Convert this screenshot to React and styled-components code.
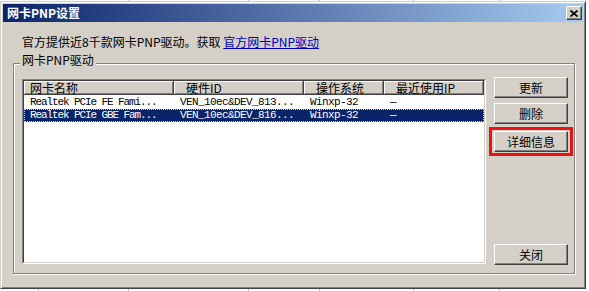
import React from 'react';
import styled, { createGlobalStyle } from 'styled-components';

const GlobalStyle = createGlobalStyle`
  html, body { margin: 0; padding: 0; background: #fff; }
  body {
    font-family: "Noto Sans CJK SC", "Liberation Sans", sans-serif;
    font-size: 12px;
    color: #000;
  }
  #root { width: 589px; height: 291px; overflow: hidden; }
`;

const CJK = `"Noto Sans CJK SC", "Liberation Sans", sans-serif`;
const MONO = `"Liberation Mono", "Noto Sans CJK SC", monospace`;

const vline = (x) =>
  `linear-gradient(to right, transparent ${x}px, #c4c4c4 ${x}px, #c4c4c4 ${x + 1}px, transparent ${x + 1}px)`;

const Page = styled.div`
  width: 589px;
  height: 291px;
  box-sizing: border-box;
  padding-top: 1px;
  background-color: #fff;
  background-image: ${[38, 128, 248, 319, 413, 499].map(vline).join(', ')};
`;

const Window = styled.div`
  box-sizing: border-box;
  width: 586px;
  height: 288px;
  background: #d4d0c8;
  border: 1px solid;
  border-color: #d4d0c8 #404040 #404040 #d4d0c8;
  box-shadow: inset 1px 1px 0 #fff, inset -1px -1px 0 #808080;
  padding: 2px;
  display: flex;
  flex-direction: column;
`;

const TitleBar = styled.div`
  height: 18px;
  flex: none;
  display: flex;
  align-items: center;
  padding-left: 4px;
  background: linear-gradient(to right, #0a246a, #a6caf0);
  color: #fff;
  font-weight: bold;
  font-size: 12px;
  line-height: 18px;
  font-family: ${CJK};
`;

const TitleText = styled.span`
  flex: 1;
`;

const CloseButton = styled.div`
  box-sizing: border-box;
  width: 16px;
  height: 14px;
  margin-right: 1px;
  background: #d4d0c8;
  border: 1px solid;
  border-color: #fff #404040 #404040 #fff;
  box-shadow: inset -1px -1px 0 #808080;
  display: flex;
  align-items: center;
  justify-content: center;
`;

const Body = styled.div`
  flex: 1;
  display: flex;
  flex-direction: column;
  padding: 13px 7px 12px 10px;
  min-height: 0;
`;

const Intro = styled.div`
  height: 14px;
  line-height: 14px;
  padding-left: 9px;
  font-family: ${CJK};
  font-size: 12px;
  white-space: nowrap;
`;

const Link = styled.a`
  color: #0000c0;
  text-decoration: underline;
  cursor: pointer;
`;

const GroupBox = styled.div`
  position: relative;
  flex: 1;
  margin-top: 14px;
  margin-right: 1px;
  border: 1px solid #808080;
  box-shadow: inset 1px 1px 0 #fff, 1px 1px 0 #fff;
  display: flex;
  gap: 8px;
  padding: 13px 6px 8px 8px;
  min-height: 0;
`;

const Legend = styled.span`
  position: absolute;
  top: -11px;
  left: 6px;
  padding: 0 2px;
  background: #d4d0c8;
  line-height: 14px;
  font-family: ${CJK};
  font-size: 12px;
`;

const ListOuter = styled.div`
  flex: 1;
  margin: 2px 0 1px;
  border: 1px solid;
  border-color: #808080 #fff #fff #808080;
  display: flex;
`;

const ListInner = styled.div`
  flex: 1;
  border: 1px solid;
  border-color: #404040 #d4d0c8 #d4d0c8 #404040;
  background: #fff;
  overflow: hidden;
`;

const COLS = '150px 130px 80px 100px';

const HeaderRow = styled.div`
  display: grid;
  grid-template-columns: ${COLS};
  height: 14px;
`;

const HeaderCell = styled.div`
  box-sizing: border-box;
  height: 14px;
  background: #d4d0c8;
  border-right: 1px solid #404040;
  border-bottom: 1px solid #404040;
  box-shadow: inset 1px 1px 0 #fff, inset -1px -1px 0 #808080;
  padding-left: ${(p) => p.$pad}px;
  display: flex;
  align-items: center;
  font-family: ${CJK};
  font-size: 12px;
  line-height: 12px;
  white-space: nowrap;
`;

const DataRow = styled.div`
  display: grid;
  grid-template-columns: ${COLS};
  height: 13px;
  line-height: 13px;
  margin-top: ${(p) => (p.$first ? '1px' : '0')};
  background: ${(p) => (p.$selected ? '#0a246a' : 'transparent')};
  color: ${(p) => (p.$selected ? '#fff' : '#000')};
  outline: ${(p) => (p.$selected ? '1px dotted #c8c8ff' : 'none')};
  outline-offset: -1px;
`;

const DataCell = styled.div`
  padding-left: 6px;
  font-family: ${MONO};
  font-size: 11px;
  letter-spacing: ${(p) => (p.$tight ? '-1.1px' : '-0.6px')};
  white-space: nowrap;
  overflow: hidden;
`;

const ButtonColumn = styled.div`
  width: 76px;
  display: flex;
  flex-direction: column;
`;

const Button = styled.div`
  position: relative;
  box-sizing: border-box;
  height: 21px;
  margin-top: ${(p) => p.$gap || 0}px;
  background: #d4d0c8;
  border: 1px solid;
  border-color: #fff #404040 #404040 #fff;
  box-shadow: inset -1px -1px 0 #808080;
  display: flex;
  align-items: center;
  justify-content: center;
  font-family: ${CJK};
  font-size: 12px;
  line-height: 19px;
  ${(p) => (p.$bottom ? 'margin-top: auto;' : '')}
  ${(p) =>
    p.$highlight
      ? `&::after {
          content: '';
          position: absolute;
          top: -5px;
          left: -6px;
          right: -6px;
          bottom: -5px;
          border: 3px solid #ee1111;
        }`
      : ''}
`;

const rows = [
  ['Realtek PCIe FE Fami...', 'VEN_10ec&DEV_813...', 'Winxp-32', '—'],
  ['Realtek PCIe GBE Fam...', 'VEN_10ec&DEV_816...', 'Winxp-32', '—'],
];

export default function App() {
  return (
    <>
      <GlobalStyle />
      <Page>
        <Window>
          <TitleBar>
            <TitleText>网卡PNP设置</TitleText>
            <CloseButton>
              <svg width="8" height="7" viewBox="0 0 8 7">
                <path d="M0.5 0.5 L7.5 6.5 M7.5 0.5 L0.5 6.5" stroke="#000" strokeWidth="1.7" fill="none" />
              </svg>
            </CloseButton>
          </TitleBar>
          <Body>
            <Intro>
              官方提供近8千款网卡PNP驱动。获取 <Link>官方网卡PNP驱动</Link>
            </Intro>
            <GroupBox>
              <Legend>网卡PNP驱动</Legend>
              <ListOuter>
                <ListInner>
                  <HeaderRow>
                    <HeaderCell $pad={6}>网卡名称</HeaderCell>
                    <HeaderCell $pad={12}>硬件ID</HeaderCell>
                    <HeaderCell $pad={12}>操作系统</HeaderCell>
                    <HeaderCell $pad={12}>最近使用IP</HeaderCell>
                  </HeaderRow>
                  {rows.map((r, i) => (
                    <DataRow key={i} $first={i === 0} $selected={i === 1}>
                      <DataCell $tight>{r[0]}</DataCell>
                      <DataCell>{r[1]}</DataCell>
                      <DataCell>{r[2]}</DataCell>
                      <DataCell>{r[3]}</DataCell>
                    </DataRow>
                  ))}
                </ListInner>
              </ListOuter>
              <ButtonColumn>
                <Button>更新</Button>
                <Button $gap={5}>删除</Button>
                <Button $gap={7} $highlight>详细信息</Button>
                <Button $bottom>关闭</Button>
              </ButtonColumn>
            </GroupBox>
          </Body>
        </Window>
      </Page>
    </>
  );
}
